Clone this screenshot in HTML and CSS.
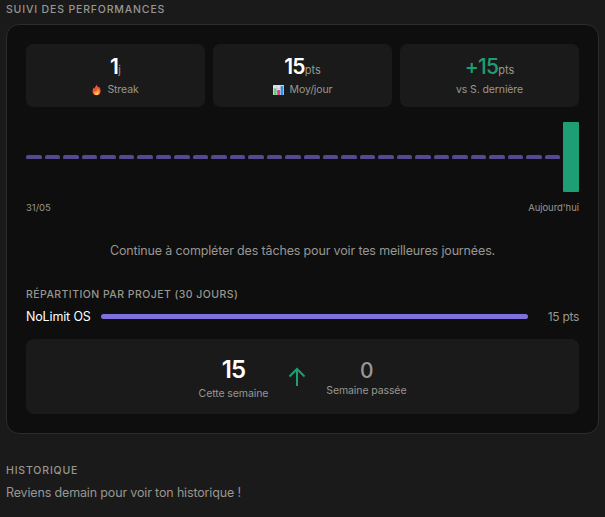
FILE: index.html
```html
<!DOCTYPE html>
<html lang="fr">
<head>
    <meta charset="UTF-8">
    <meta name="viewport" content="width=device-width, initial-scale=1.0">
    <title>Suivi des performances</title>
    <link rel="stylesheet" href="styles.css">
</head>
<body>
    <section>
        <h2 class="section-title">Suivi des performances</h2>
        <div class="card">
            <div class="stats">
                <div class="stat">
                    <div class="stat-value">1<span class="unit">j</span></div>
                    <div class="stat-label">
                        <svg class="emoji flame" width="9" height="12" viewBox="0 0 9 12">
                            <path d="M4.3 0.6C5 2.2 6 2.4 6.3 3.6L7 2.8C8.2 4.2 8.8 5.6 8.6 7.5C8.4 9.8 6.9 11.2 4.6 11.2C2.2 11.2 0.5 9.8 0.5 7.5C0.5 5.8 1.2 4.8 1.6 3.6L2.5 4.4C3 3 4.4 2.2 4.3 0.6Z" fill="#f1513a"/>
                            <path d="M5.6 4.8C7.6 6.4 8.2 8 7.2 9.6C6.4 11 4.6 11.4 3 10.8C1.6 10 1.4 8.4 2.4 7.2L3.2 7.8C4.6 7.4 5.4 6.2 5.6 4.8Z" fill="#ff9a35"/>
                            <path d="M5.6 7.4C6.8 8.6 6.8 10 5.4 10.8C4 11.2 2.8 10.6 3 9.4C4 9.6 5.2 8.8 5.6 7.4Z" fill="#ffd65a"/>
                        </svg>
                        <span>Streak</span>
                    </div>
                </div>
                <div class="stat">
                    <div class="stat-value">15<span class="unit">pts</span></div>
                    <div class="stat-label">
                        <svg class="emoji" width="11" height="10" viewBox="0 0 11 10">
                            <rect width="11" height="10" rx="0.5" fill="#e1dfe8"/>
                            <path d="M0 3.5H11M0 6.5H11M3.7 0V10M7.3 0V10" stroke="#b9b6c6" stroke-width="0.4"/>
                            <rect x="0.8" y="3.5" width="2.7" height="6.5" fill="#65c987"/>
                            <rect x="4.2" y="5" width="2.8" height="5" fill="#e0407c"/>
                            <rect x="7.7" y="1" width="2.7" height="9" fill="#348bea"/>
                        </svg>
                        <span>Moy/jour</span>
                    </div>
                </div>
                <div class="stat">
                    <div class="stat-value positive">+15<span class="unit">pts</span></div>
                    <div class="stat-label">vs S. dernière</div>
                </div>
            </div>

            <div class="chart" id="chart"></div>
            <div class="chart-labels">
                <span>31/05</span>
                <span>Aujourd'hui</span>
            </div>

            <p class="hint">Continue à compléter des tâches pour voir tes meilleures journées.</p>

            <h3 class="section-title">Répartition par projet (30 jours)</h3>
            <div class="project">
                <span class="project-name">NoLimit OS</span>
                <div class="project-bar"></div>
                <span class="project-points">15 pts</span>
            </div>

            <div class="weeks">
                <div class="week">
                    <div class="week-value">15</div>
                    <div class="week-label">Cette semaine</div>
                </div>
                <svg class="arrow" width="18" height="20" viewBox="0 0 18 20">
                    <path d="M9 19V2M1.5 9.5L9 2L16.5 9.5"/>
                </svg>
                <div class="week previous">
                    <div class="week-value">0</div>
                    <div class="week-label">Semaine passée</div>
                </div>
            </div>
        </div>
    </section>

    <section class="history">
        <h2 class="section-title">Historique</h2>
        <p class="history-text">Reviens demain pour voir ton historique !</p>
    </section>

    <script>
        // One bar per day, the last one is today
        var points = new Array(29).fill(0).concat(15);
        var max = Math.max.apply(null, points);
        var chart = document.getElementById('chart');

        points.forEach(function(value, i) {
            var bar = document.createElement('div');
            bar.className = i === points.length - 1 ? 'bar today' : 'bar';
            bar.style.height = Math.max(4, value / max * 70) + 'px';
            chart.appendChild(bar);
        });
    </script>
</body>
</html>
```
FILE: styles.css
```css
* {
    box-sizing: border-box;
}

body {
    margin: 0;
    padding: 3px 6px 0;
    background-color: #1a1a1a;
    color: #fff;
    font-family: Inter, "Liberation Sans", sans-serif;
}

h2, h3, p {
    margin: 0;
}

.section-title {
    font-size: 10.5px;
    font-weight: 500;
    line-height: 14px;
    letter-spacing: 0.84px;
    text-transform: uppercase;
    color: #989791;
}

.card {
    margin-top: 7px;
    height: 410px;
    padding: 19px;
    background-color: #0e0e0e;
    border: 1px solid #2c2c2c;
    border-radius: 13px;
}

.card .section-title {
    letter-spacing: 0.45px;
}

.stats {
    display: grid;
    grid-template-columns: repeat(3, 1fr);
    gap: 8px;
}

.stat {
    height: 63px;
    padding-top: 10px;
    background-color: #1a1a1a;
    border-radius: 7px;
    text-align: center;
}

.stat-value {
    font-size: 21px;
    font-weight: 600;
    line-height: 25px;
    letter-spacing: -0.7px;
}

.stat-value.positive {
    color: #1d9e75;
    font-weight: 500;
}

.unit {
    font-size: 11px;
    font-weight: 400;
    letter-spacing: 0;
    color: #989791;
}

.stat-label {
    display: flex;
    justify-content: center;
    align-items: center;
    gap: 6px;
    font-size: 10.5px;
    line-height: 14px;
    letter-spacing: -0.1px;
    color: #989791;
}

.chart {
    display: flex;
    align-items: center;
    gap: 3px;
    height: 70px;
    margin-top: 15px;
}

.bar {
    flex: 1;
    background-color: #534a91;
    border-radius: 2px 2px 1px 1px;
}

.bar.today {
    background-color: #1d9e75;
    border-radius: 1px;
}

.chart-labels {
    display: flex;
    justify-content: space-between;
    margin-top: 10px;
    font-size: 9.5px;
    line-height: 12px;
    letter-spacing: -0.05px;
    color: #989791;
}

.hint {
    margin: 28px 0;
    font-size: 12.5px;
    line-height: 18px;
    letter-spacing: -0.15px;
    text-align: center;
    color: #989791;
}

.project {
    display: flex;
    align-items: center;
    height: 18px;
    margin-top: 5px;
    font-size: 12px;
}

.project-name {
    width: 75px;
    font-size: 12.5px;
    letter-spacing: -0.15px;
}

.project-bar {
    flex: 1;
    height: 5px;
    background-color: #7f71dd;
    border-radius: 3px;
}

.project-points {
    width: 51px;
    letter-spacing: -0.3px;
    text-align: right;
    color: #989791;
}

.weeks {
    display: flex;
    justify-content: center;
    align-items: center;
    gap: 20px;
    height: 75px;
    margin-top: 14px;
    background-color: #1a1a1a;
    border-radius: 8px;
    text-align: center;
}

.week-value {
    padding-top: 3px;
    font-size: 24px;
    font-weight: 600;
    line-height: 28px;
    letter-spacing: -1px;
}

.week-label {
    margin-top: 3px;
    font-size: 10.5px;
    line-height: 14px;
    letter-spacing: -0.1px;
    color: #989791;
}

.previous .week-value {
    font-size: 21px;
    font-weight: 500;
    line-height: 23px;
    color: #989791;
}

.previous .week-label {
    margin-top: 2px;
}

.arrow {
    fill: none;
    stroke: #1d9e75;
    stroke-width: 2;
}

.history {
    margin-top: 30px;
}

.history-text {
    margin-top: 6px;
    font-size: 12.5px;
    line-height: 18px;
    letter-spacing: -0.15px;
    color: #989791;
}
```
